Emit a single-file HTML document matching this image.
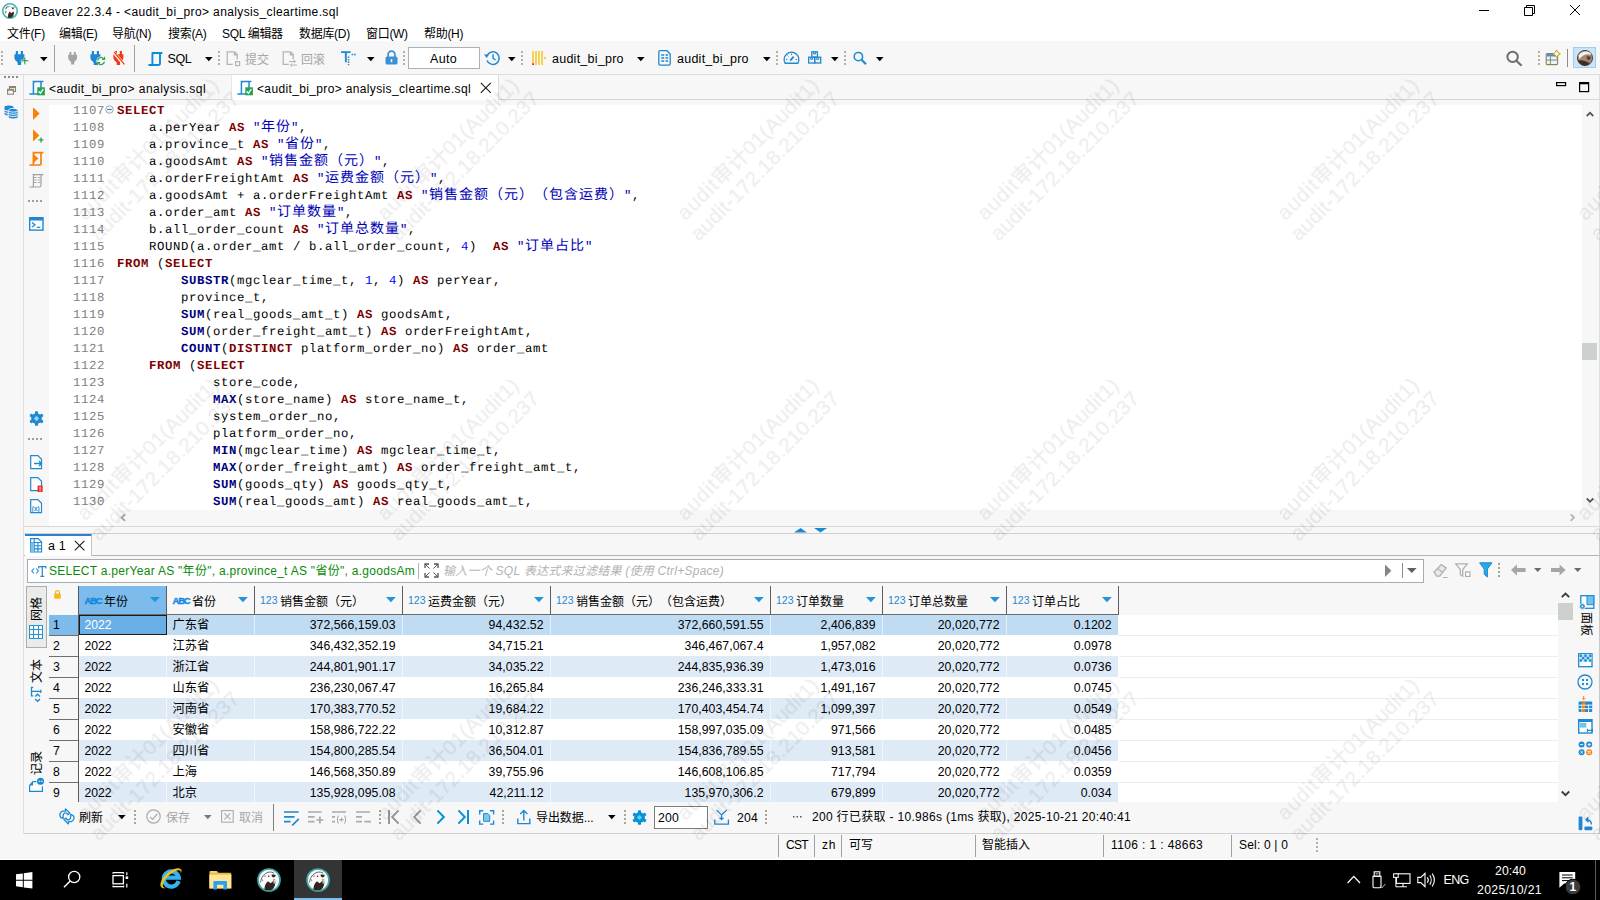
<!DOCTYPE html>
<html lang="zh">
<head>
<meta charset="utf-8">
<title>DBeaver 22.3.4 - &lt;audit_bi_pro&gt; analysis_cleartime.sql</title>
<style>
*{box-sizing:border-box;margin:0;padding:0}
html,body{width:1600px;height:900px;overflow:hidden;background:#f7f7f7}
body{position:relative;text-spacing-trim:space-all;font-family:"Liberation Sans","Noto Sans CJK SC",sans-serif;font-size:12px;color:#000}
.abs{position:absolute}
.t{position:absolute;white-space:pre;line-height:16px;height:16px}
svg{position:absolute;overflow:visible}
#titlebar{left:0;top:0;width:1600px;height:23px;background:#fff}
#menubar{left:0;top:23px;width:1600px;height:18px;background:#fff}
#toolbar{left:0;top:41px;width:1600px;height:34px;background:#f7f7f7;border-bottom:1px solid #dcdcdc}
#tabrow{left:24px;top:75px;width:1575px;height:25px;background:#f7f7f7;border-bottom:1px solid #d6d6d6}
#leftstrip{left:23px;top:74px;width:1577px;height:760px;border:1px solid #dedede;border-top:none}
#editor{left:24px;top:100px;width:1575px;height:426px;background:#f7f7f7}
#code{left:49px;top:105px;width:1533px;height:405px;background:#fff}
.ln{position:absolute;left:73px;font:12.3px/17px "Liberation Mono",monospace;letter-spacing:.62px;text-rendering:geometricPrecision;color:#808080;white-space:pre}
.cl{position:absolute;left:117px;font:12.3px/17px "Liberation Mono","Noto Sans CJK SC",monospace;letter-spacing:.62px;text-rendering:geometricPrecision;color:#000;white-space:pre;height:17px}
.z{font-size:14px;letter-spacing:1px;line-height:17px}
.k{color:#800000;font-weight:bold}
.f{color:#000080;font-weight:bold}
.s{color:#0000b4}
.n{color:#0000ff}
.wm{position:absolute;white-space:nowrap;font-size:21px;line-height:24px;color:#000;-webkit-text-stroke:.3px #000;transform-origin:0 0;transform:rotate(-45deg)}
.wm span{margin-left:-5px;letter-spacing:.12px}
.wm i{font-style:normal;letter-spacing:.75px}
.wm b{font-weight:normal;letter-spacing:.22px}
#taskbar{left:0;top:859px;width:1600px;height:41px;background:#000;border-top:1px solid #fff}
</style>
</head>
<body>
<div id="titlebar" class="abs"></div>
<div id="menubar" class="abs"></div>
<div id="toolbar" class="abs"></div>
<div id="leftstrip" class="abs"></div>
<div id="tabrow" class="abs"></div>
<div id="editor" class="abs"></div>
<div id="code" class="abs"></div>
<svg style="left:1px;top:2px" width="18" height="18" viewBox="-9 -9 18 18"><circle r="7.2" fill="#fdfdfd" stroke="#45b7b6" stroke-width="1.6"/><path d="M-2.2 6.6C-2 3.5-1.4 1.6-.2.6L1.4 2.2 3.3.4 3.9 1.3C4.2 3.4 3.4 5.4 2 6.6-.2 7.2-1.2 7.1-2.2 6.6z" fill="#3b2a24"/><path d="M1.2-3.4h3.4L2.9-1.5z" fill="#3b2a24"/><path d="M-4.6-1.9c.3-1.3.9-2.2 1.9-2.9l.7.5c-1 .7-1.6 1.6-1.9 2.8zM-4.9 1.9l.6-2.2.8.3-.5 2.2z" fill="#5a4a44"/><path d="M-2.2-4.2c.8-.5 1.6-.6 2.5-.5l-.2.8c-.7-.1-1.3 0-1.9.4z" fill="#8a7f7a"/></svg>
<div class="t" style="left:23.5px;top:4px;font-size:12px;letter-spacing:.38px">DBeaver 22.3.4 - &lt;audit_bi_pro&gt; analysis_cleartime.sql</div>
<svg style="left:1479px;top:4px" width="102" height="12" fill="none" stroke="#000" stroke-width="1"><path d="M0 6.5h10"/><path d="M45.5 3.5h8v8h-8zM47.5 3.5v-2h8v8h-2"/><path d="M91 1l10 10M101 1l-10 10"/></svg>
<div class="t" style="left:7px;top:26px;letter-spacing:-.3px">文件(F)</div>
<div class="t" style="left:59px;top:26px;letter-spacing:-.3px">编辑(E)</div>
<div class="t" style="left:112px;top:26px;letter-spacing:-.3px">导航(N)</div>
<div class="t" style="left:168px;top:26px;letter-spacing:-.3px">搜索(A)</div>
<div class="t" style="left:222px;top:26px;letter-spacing:-.3px">SQL 编辑器</div>
<div class="t" style="left:299px;top:26px;letter-spacing:-.3px">数据库(D)</div>
<div class="t" style="left:366px;top:26px;letter-spacing:-.3px">窗口(W)</div>
<div class="t" style="left:424px;top:26px;letter-spacing:-.3px">帮助(H)</div>
<svg style="left:1px;top:51px" width="2" height="16"><rect x="0" y="0" width="2" height="2" fill="#b9b0a0"/><rect x="0" y="4" width="2" height="2" fill="#b9b0a0"/><rect x="0" y="8" width="2" height="2" fill="#b9b0a0"/><rect x="0" y="12" width="2" height="2" fill="#b9b0a0"/></svg>
<svg style="left:218px;top:51px" width="2" height="16"><rect x="0" y="0" width="2" height="2" fill="#b9b0a0"/><rect x="0" y="4" width="2" height="2" fill="#b9b0a0"/><rect x="0" y="8" width="2" height="2" fill="#b9b0a0"/><rect x="0" y="12" width="2" height="2" fill="#b9b0a0"/></svg>
<svg style="left:403px;top:51px" width="2" height="16"><rect x="0" y="0" width="2" height="2" fill="#b9b0a0"/><rect x="0" y="4" width="2" height="2" fill="#b9b0a0"/><rect x="0" y="8" width="2" height="2" fill="#b9b0a0"/><rect x="0" y="12" width="2" height="2" fill="#b9b0a0"/></svg>
<svg style="left:521px;top:51px" width="2" height="16"><rect x="0" y="0" width="2" height="2" fill="#b9b0a0"/><rect x="0" y="4" width="2" height="2" fill="#b9b0a0"/><rect x="0" y="8" width="2" height="2" fill="#b9b0a0"/><rect x="0" y="12" width="2" height="2" fill="#b9b0a0"/></svg>
<svg style="left:776px;top:51px" width="2" height="16"><rect x="0" y="0" width="2" height="2" fill="#b9b0a0"/><rect x="0" y="4" width="2" height="2" fill="#b9b0a0"/><rect x="0" y="8" width="2" height="2" fill="#b9b0a0"/><rect x="0" y="12" width="2" height="2" fill="#b9b0a0"/></svg>
<svg style="left:844px;top:51px" width="2" height="16"><rect x="0" y="0" width="2" height="2" fill="#b9b0a0"/><rect x="0" y="4" width="2" height="2" fill="#b9b0a0"/><rect x="0" y="8" width="2" height="2" fill="#b9b0a0"/><rect x="0" y="12" width="2" height="2" fill="#b9b0a0"/></svg>
<svg style="left:1538px;top:51px" width="2" height="16"><rect x="0" y="0" width="2" height="2" fill="#b9b0a0"/><rect x="0" y="4" width="2" height="2" fill="#b9b0a0"/><rect x="0" y="8" width="2" height="2" fill="#b9b0a0"/><rect x="0" y="12" width="2" height="2" fill="#b9b0a0"/></svg>
<div class="abs" style="left:54px;top:45px;width:1px;height:27px;background:#a0a0a0"></div>
<div class="abs" style="left:134px;top:45px;width:1px;height:27px;background:#a0a0a0"></div>
<svg style="left:40px;top:57px" width="8" height="5"><path d="M0 0h7.6L3.8 4.2z" fill="#000"/></svg>
<svg style="left:205px;top:57px" width="8" height="5"><path d="M0 0h7.6L3.8 4.2z" fill="#000"/></svg>
<svg style="left:367px;top:57px" width="8" height="5"><path d="M0 0h7.6L3.8 4.2z" fill="#000"/></svg>
<svg style="left:508px;top:57px" width="8" height="5"><path d="M0 0h7.6L3.8 4.2z" fill="#000"/></svg>
<svg style="left:637px;top:57px" width="8" height="5"><path d="M0 0h7.6L3.8 4.2z" fill="#000"/></svg>
<svg style="left:763px;top:57px" width="8" height="5"><path d="M0 0h7.6L3.8 4.2z" fill="#000"/></svg>
<svg style="left:831px;top:57px" width="8" height="5"><path d="M0 0h7.6L3.8 4.2z" fill="#000"/></svg>
<svg style="left:876px;top:57px" width="8" height="5"><path d="M0 0h7.6L3.8 4.2z" fill="#000"/></svg>
<svg style="left:13px;top:51px" width="16" height="16"><path transform="scale(1)" d="M2.800 0h2.200v3.200h2.800V0h2.200v3.200h1.400v3.400c0 1.800-.9 3.100-2.400 3.900l-.9 1.300v2.300H4.700v-2.300l-.9-1.300C2.300 9.700 1.400 8.400 1.400 6.600V3.200h1.400z" fill="#1e88d2"/></svg>
<svg style="left:21px;top:57px" width="8" height="8"><path d="M3 0h1.6v2.900h2.900v1.6H4.600v2.900H3V4.500H0V2.900h3z" fill="#26a045" stroke="#f7f7f7" stroke-width=".5"/></svg>
<svg style="left:67px;top:52px" width="16" height="16"><path transform="scale(0.88)" d="M2.800 0h2.200v3.200h2.800V0h2.200v3.200h1.400v3.400c0 1.800-.9 3.100-2.400 3.900l-.9 1.300v2.300H4.700v-2.300l-.9-1.300C2.300 9.700 1.400 8.400 1.400 6.600V3.200h1.400z" fill="#a3a3a3"/></svg>
<svg style="left:89px;top:51px" width="16" height="16"><path transform="scale(1)" d="M2.800 0h2.200v3.200h2.800V0h2.200v3.200h1.400v3.400c0 1.800-.9 3.100-2.400 3.900l-.9 1.300v2.300H4.700v-2.300l-.9-1.300C2.300 9.700 1.400 8.400 1.400 6.600V3.200h1.400z" fill="#1e88d2"/></svg>
<svg style="left:96px;top:56px" width="10" height="10" fill="none" stroke="#2aa84a" stroke-width="1.4"><circle cx="5" cy="5" r="4.6" fill="#f7f7f7" stroke="none"/><path d="M1.600 4.300A3.400 3.400 0 0 1 7.600 2.700M8.400 5.700A3.400 3.400 0 0 1 2.400 7.300"/><path d="M8.6 0.800v2.600H6M1.400 9.200V6.600H4" stroke-width="1.100"/></svg>
<svg style="left:112px;top:51px" width="16" height="16"><path transform="scale(1)" d="M2.800 0h2.200v3.200h2.800V0h2.200v3.200h1.400v3.400c0 1.800-.9 3.100-2.400 3.900l-.9 1.300v2.300H4.700v-2.300l-.9-1.300C2.300 9.700 1.400 8.400 1.400 6.600V3.200h1.400z" fill="#f03a17"/></svg>
<svg style="left:112px;top:51px" width="16" height="16"><path d="M2 1.500L12 13.500" stroke="#f7f7f7" stroke-width="3"/><path d="M2.200 1.200L12.400 13.400" stroke="#f03a17" stroke-width="1.300"/></svg>
<svg style="left:148px;top:50.5px" width="16" height="16" fill="none" stroke="#0a8fd6" stroke-width="1.9"><path d="M3.600 2h10.800M12 2.200v10c0 1.200-.7 1.800-1.800 1.800H.4M4.400 13.800V3.800c0-1.100.6-1.800 1.700-1.800"/></svg>
<div class="t" style="left:167.500px;top:51px;font-size:12.500px;letter-spacing:-.4px">SQL</div>
<svg style="left:226px;top:51px" width="16" height="16" fill="none" stroke="#b4b4b4" stroke-width="1.300"><path d="M8.500 .8H1.200v12.600h5.600M8.500 .8l2.700 2.800v5M8.400 1v2.800h2.800" /></svg>
<svg style="left:235px;top:61px" width="6" height="6" fill="none" stroke="#b4b4b4" stroke-width="1.200"><rect x=".6" y=".6" width="4" height="4"/></svg>
<div class="t" style="left:245px;top:52px;color:#a6a6a6">提交</div>
<svg style="left:282px;top:51px" width="16" height="16" fill="none" stroke="#b4b4b4" stroke-width="1.300"><path d="M8.500 .8H1.200v12.600h5.600M8.500 .8l2.700 2.800v5M8.400 1v2.800h2.800" /></svg>
<svg style="left:289px;top:60px" width="9" height="7" fill="none" stroke="#b4b4b4" stroke-width="1"><path d="M0 1.500h6.500M4.800 0l1.700 1.500-1.700 1.500M8 5h-6.500M3.200 3.500L1.500 5l1.700 1.500"/></svg>
<div class="t" style="left:301px;top:52px;color:#a6a6a6">回滚</div>
<svg style="left:341px;top:50px" width="16" height="16" fill="#1e88d2"><path d="M0 1.200h9.600v1.900H5.800v9.200H3.900V3.100H0z"/><path d="M10.600 3.800h1.600v1.500h-1.600zM13.200 3.800h1.600v1.500h-1.600zM6.800 6.400h1.500v1.500H6.800zM6.800 9h1.500v1.500H6.800zM6.800 11.600h1.500v1.500H6.800zM6.800 14.100h1.500v1.100H6.800z"/></svg>
<svg style="left:385px;top:50px" width="13" height="16"><path d="M3.100 7V4.600a3.400 3.400 0 0 1 6.800 0V7" fill="none" stroke="#3a8fd6" stroke-width="1.700"/><rect x=".5" y="6.600" width="12" height="8" rx="1.600" fill="#3a8fd6"/><rect x="5.700" y="9.200" width="1.600" height="3" fill="#fff"/></svg>
<div class="abs" style="left:408px;top:47px;width:72px;height:22px;background:#fff;border:1px solid #a9b1b8"></div>
<div class="t" style="left:430px;top:51px;font-size:12.500px;letter-spacing:.3px">Auto</div>
<svg style="left:484px;top:50px" width="17" height="16" fill="none" stroke="#1e88d2" stroke-width="1.500"><path d="M3.300 5.200A6.300 6.300 0 1 1 3 10.400"/><path d="M9 4.200V8.200l2.600 1.800" stroke-width="1.400"/><path d="M0 4.600h5v0L2.600 8z" fill="#1e88d2" stroke="none"/></svg>
<svg style="left:532px;top:50px" width="16" height="16"><path d="M1 1v12M4 1v14M7 1v14M10 1v14" stroke="#f7c51e" stroke-width="1.500"/><path d="M12.200 6.500l2.200 1.500-2.200 1.500z" fill="#f7c51e"/><rect x=".2" y="13.200" width="1.800" height="1.800" fill="#e8281f"/></svg>
<div class="t" style="left:552px;top:51px;font-size:12.500px;letter-spacing:.25px">audit_bi_pro</div>
<svg style="left:658px;top:50px" width="14" height="16" fill="none" stroke="#1e88d2"><path d="M9 .7H2.200C1.400 .7.800 1.300.8 2.100v11.700c0 .8.600 1.400 1.400 1.400h8.600c.8 0 1.400-.6 1.400-1.400V4.100z" stroke-width="1.300"/><path d="M3.200 5h3M3.200 8h3M3.200 11h3M7.500 5h2.600M7.500 8h2.600M7.500 11h2.600" stroke-width="1.500"/></svg>
<div class="t" style="left:677px;top:51px;font-size:12.500px;letter-spacing:.25px">audit_bi_pro</div>
<svg style="left:783px;top:51px" width="17" height="14" fill="none" stroke="#1e88d2" stroke-width="1.400"><path d="M2.200 12.300A7.300 7.300 0 1 1 14.800 12.300z"/><path d="M7.200 9.600L10.600 5.600" stroke-width="1.800"/><path d="M3 8.500h1.400M8.500 2.700v1.400M12.600 8.500h1.400M4.400 4.400l1 1" stroke-width="1"/></svg>
<svg style="left:808px;top:51px" width="14" height="14" fill="none" stroke="#1e88d2" stroke-width="1.300"><rect x="3.800" y=".8" width="5.600" height="5.400"/><rect x=".7" y="6.200" width="6" height="5.800"/><rect x="6.700" y="6.200" width="6" height="5.800"/><path d="M5.600 1v2h2V1M2.700 6.400v2h2v-2M8.700 6.400v2h2v-2" stroke-width="1"/></svg>
<svg style="left:853px;top:51px" width="15" height="15" fill="none" stroke="#1a8ad6"><circle cx="5.400" cy="5.600" r="4.200" stroke-width="1.500"/><path d="M8.600 8.800l4.400 4.400" stroke-width="2.200"/></svg>
<svg style="left:1505px;top:49px" width="19" height="19" fill="none" stroke="#6e6e6e"><circle cx="7.600" cy="7.900" r="5.200" stroke-width="2"/><path d="M11.400 11.700l5.200 5" stroke-width="2.200"/></svg>
<svg style="left:1545px;top:50px" width="17" height="16" fill="none"><rect x="1.200" y="3.600" width="11.400" height="11" rx="1" stroke="#8f8259" stroke-width="1.100" fill="#e6f4fc"/><rect x="1.700" y="4.100" width="10.400" height="2.400" fill="#4a90d9"/><path d="M1.200 10h11.400M5.400 6.600v8" stroke="#8f8259" stroke-width="1"/><path d="M11.600 0l1.400 2.400 2.400 1.400-2.400 1.400-1.400 2.400-1.400-2.400-2.400-1.400 2.400-1.400z" fill="#fff6cf" stroke="#c9991c" stroke-width="1"/></svg>
<div class="abs" style="left:1567px;top:49px;width:1px;height:18px;background:#8c8c8c"></div>
<div class="abs" style="left:1573px;top:47px;width:23px;height:21px;background:#cce4f7;border:1px solid #9ccff5"></div>
<svg style="left:1576px;top:49px" width="18" height="18" viewBox="-9 -9 18 18"><circle r="7.600" fill="#a58873" stroke="#3d3d3d" stroke-width=".9"/><path d="M-7 2.600C-3 1.600 2 3.400 4.600 5.800 2.600 7.400-.6 8 -3.600 6.800-5.400 5.800-6.600 4.400-7 2.600z" fill="#3e2c25"/><path d="M-6.600-2.400C-4-6.800 2.400-7.800 5.600-4.800L6.400-3.200C2-5-2.600-3-5.400 1z" fill="#f4efe9"/><path d="M1.600-1.200c1.400-.8 3.200-.6 4.400.4-.2 1.600-1.200 2.600-2.800 3-1-.8-1.600-2-1.600-3.400z" fill="#5a4034"/></svg>
<svg style="left:4px;top:76px" width="16" height="2" ><rect x="0" y="0" width="2" height="2" fill="#8c8c8c"/><rect x="4" y="0" width="2" height="2" fill="#8c8c8c"/><rect x="8" y="0" width="2" height="2" fill="#8c8c8c"/><rect x="12" y="0" width="2" height="2" fill="#8c8c8c"/></svg>
<svg style="left:7px;top:86px" width="9" height="9" fill="none" stroke="#8c8373" stroke-width="1.100"><path d="M2.500 3V.6h6v4.800H6.400M.6 3.200h5.800v5H.6z" /><path d="M.6 4h5.800M2.500 1.300h6" stroke-width="1.300"/></svg>
<svg style="left:3px;top:104px" width="16" height="16" ><g fill="#1e88d2" stroke="#f7f7f7" stroke-width=".9"><path d="M1 3.300c0-1.300 2.300-2.300 5-2.300s5 1 5 2.300v6.400c0 1.300-2.300 2.300-5 2.300s-5-1-5-2.300z"/><path d="M1 5.700c1 .9 2.900 1.400 5 1.400M1 8c1 .9 2.900 1.400 5 1.400" fill="none" stroke-width="1"/><path d="M5.200 6.700c0-1.300 2.300-2.300 5-2.300s5 1 5 2.300v6c0 1.300-2.300 2.300-5 2.300s-5-1-5-2.300z"/><path d="M5.200 8.900c1 .9 2.900 1.400 5 1.400s4-.5 5-1.400M5.200 11.100c1 .9 2.900 1.400 5 1.400s4-.5 5-1.400M5.200 6.700c1 .9 2.900 1.400 5 1.400s4-.5 5-1.400" fill="none" stroke-width="1"/></g></svg>
<div class="abs" style="left:231px;top:75px;width:268px;height:25px;background:#fff;border-right:1px solid #dcdcdc;border-left:1px solid #e6e6e6"></div>
<svg style="left:29px;top:80px" width="16" height="16" fill="none" stroke="#1e88d2" stroke-width="1.5"><path d="M3.600 1.600h10.800M12 1.800v10.400c0 1.200-.7 1.800-1.800 1.800H.4M4.400 13.800V3.400c0-1.100.6-1.800 1.700-1.800"/></svg><svg style="left:37px;top:87px" width="9" height="9" ><rect x=".3" y=".3" width="7.600" height="8" fill="#21a352"/><path d="M1.600 4.300l1.800 2 2.900-4.200" fill="none" stroke="#e9f7ee" stroke-width="1.500"/></svg>
<div class="t" style="top:81px;letter-spacing:0.428px;left:49px;">&lt;audit_bi_pro&gt; analysis.sql</div>
<svg style="left:237px;top:80px" width="16" height="16" fill="none" stroke="#1e88d2" stroke-width="1.5"><path d="M3.600 1.600h10.800M12 1.800v10.400c0 1.200-.7 1.800-1.800 1.800H.4M4.400 13.800V3.400c0-1.100.6-1.800 1.700-1.800"/></svg><svg style="left:245px;top:87px" width="9" height="9" ><rect x=".3" y=".3" width="7.600" height="8" fill="#21a352"/><path d="M1.600 4.300l1.800 2 2.900-4.200" fill="none" stroke="#e9f7ee" stroke-width="1.500"/></svg>
<div class="t" style="top:81px;letter-spacing:0.357px;left:257px;">&lt;audit_bi_pro&gt; analysis_cleartime.sql</div>
<svg style="left:480px;top:82px" width="12" height="12" fill="none" stroke="#1a1a1a" stroke-width="1.100"><path d="M.8.800l10 10M10.800.8l-10 10"/></svg>
<svg style="left:1555px;top:81px" width="36" height="12" fill="none" stroke="#000"><rect x="1.600" y="1.600" width="9" height="3" stroke-width="1.200"/><rect x="24.600" y="1.600" width="9" height="9" stroke-width="1.200"/><path d="M24.600 2.400h9" stroke-width="1.800"/></svg>
<svg style="left:33px;top:107px" width="8" height="14" ><path d="M0 .3L6.600 6.600 0 13z" fill="#f5820b"/></svg>
<svg style="left:33px;top:129px" width="12" height="15" ><path d="M0 .3L6.400 6.400 0 12.600z" fill="#f5820b"/><path d="M7.300 8.400h1.400v1.800h1.800v1.400H8.700v1.800H7.300v-1.800H5.500v-1.400h1.800z" fill="#2da44e"/></svg>
<svg style="left:29px;top:151px" width="16" height="16" fill="none" stroke="#f5820b" stroke-width="1.7"><path d="M3.600 1.600h10.800M12 1.800v10.400c0 1.200-.7 1.800-1.800 1.800H.4M4.400 13.800V3.400c0-1.100.6-1.800 1.700-1.800"/></svg><svg style="left:33px;top:154px" width="8" height="9" ><path d="M.6.500L5.600 4.500.6 8.500z" fill="#f5820b"/><path d="M.8.300v8.400" stroke="#f5820b" stroke-width="1.200"/></svg>
<svg style="left:29px;top:173px" width="16" height="16" fill="none" stroke="#a0a0a0" stroke-width="1.2"><path d="M3.600 1.600h10.800M12 1.800v10.400c0 1.200-.7 1.800-1.800 1.800H.4M4.400 13.800V3.400c0-1.100.6-1.800 1.700-1.800"/></svg><svg style="left:34px;top:177px" width="7" height="8" stroke="#a8a8a8" stroke-width="1"><path d="M0 .5h2.600M3.800 .5h2.600M0 3h2.600M3.800 3h2.600M0 5.500h2.600M3.800 5.500h2.600"/></svg>
<svg style="left:28px;top:200px" width="16" height="2" ><rect x="0" y="0" width="2" height="2" fill="#a39e86"/><rect x="4" y="0" width="2" height="2" fill="#a39e86"/><rect x="8" y="0" width="2" height="2" fill="#a39e86"/><rect x="12" y="0" width="2" height="2" fill="#a39e86"/></svg>
<svg style="left:29px;top:217px" width="15" height="14" ><rect x=".7" y=".7" width="13.300" height="12.400" fill="#fff" stroke="#1e88d2" stroke-width="1.400"/><rect x=".7" y=".7" width="13.300" height="2.800" fill="#1e88d2"/><path d="M3 5.500l3 2.300-3 2.300M7.800 10.400h3.600" fill="none" stroke="#1e88d2" stroke-width="1.300"/></svg>
<svg style="left:29px;top:411px" width="15" height="15" ><g transform="translate(7.500 7.500)" fill="#1e88d2"><rect x="-1.500" y="-7.300" width="3" height="4" rx=".6" transform="rotate(0)"/><rect x="-1.500" y="-7.300" width="3" height="4" rx=".6" transform="rotate(60)"/><rect x="-1.500" y="-7.300" width="3" height="4" rx=".6" transform="rotate(120)"/><rect x="-1.500" y="-7.300" width="3" height="4" rx=".6" transform="rotate(180)"/><rect x="-1.500" y="-7.300" width="3" height="4" rx=".6" transform="rotate(240)"/><rect x="-1.500" y="-7.300" width="3" height="4" rx=".6" transform="rotate(300)"/><circle r="5.300"/><path d="M0-2.700L2.700 0 0 2.700-2.700 0z" fill="#8fd6f7"/></g></svg>
<svg style="left:28px;top:438px" width="16" height="2" ><rect x="0" y="0" width="2" height="2" fill="#a39e86"/><rect x="4" y="0" width="2" height="2" fill="#a39e86"/><rect x="8" y="0" width="2" height="2" fill="#a39e86"/><rect x="12" y="0" width="2" height="2" fill="#a39e86"/></svg>
<svg style="left:29px;top:455px" width="16" height="16" ><path d="M1.7 0.7h7.200l3.600 3.600v9.400H1.7z" fill="#fff" stroke="#1e88d2" stroke-width="1.200"/><path d="M5 8.500h7.500M10 6l2.600 2.500L10 11" fill="none" stroke="#1e88d2" stroke-width="1.300"/></svg>
<svg style="left:29px;top:477px" width="16" height="16" ><path d="M1.7 0.7h7.200l3.600 3.600v9.400H1.7z" fill="#fff" stroke="#1e88d2" stroke-width="1.200"/><rect x="8.600" y="8.600" width="5" height="6.400" fill="#f3271c"/><path d="M11.100 9.800v2.800M11.100 13.300v1" stroke="#fff" stroke-width="1"/></svg>
<svg style="left:29px;top:499px" width="16" height="16" ><path d="M1.7 0.7h7.200l3.600 3.600v9.400H1.7z" fill="#fff" stroke="#1e88d2" stroke-width="1.200"/><text x="6.800" y="11.800" font-size="6.500" font-family="Liberation Sans,sans-serif" font-weight="bold" fill="#1e88d2" text-anchor="middle">(x)</text></svg>
<div class="abs" style="left:49px;top:510px;width:67px;height:16px;background:#fff;"></div>
<svg style="left:1586px;top:110px" width="10" height="10" fill="none" stroke="#555" stroke-width="1.800"><path d="M.8 6L4 2.700 7.200 6"/></svg>
<svg style="left:1586px;top:496px" width="10" height="10" fill="none" stroke="#555" stroke-width="1.800"><path d="M.8 2.500L4 5.800 7.200 2.500"/></svg>
<div class="abs" style="left:1582px;top:343px;width:15px;height:17px;background:#cdd1cd;"></div>
<svg style="left:119px;top:513px" width="10" height="10" fill="none" stroke="#a2a2a2" stroke-width="1.800"><path d="M6 1.400L2.700 4.600 6 7.800"/></svg>
<svg style="left:1568px;top:513px" width="10" height="10" fill="none" stroke="#b4b4b4" stroke-width="1.800"><path d="M2.700 1.400L6 4.600 2.700 7.800"/></svg>
<svg style="left:794px;top:527px" width="36" height="6" ><path d="M0 5.500h13L6.500 1zM20 1h13l-6.500 4.500z" fill="#1e88d2"/></svg>
<div class="ln" style="top:103px">1107</div>
<div class="cl" style="top:103px;left:117px"><b class="k">SELECT</b></div>
<div class="ln" style="top:120px">1108</div>
<div class="cl" style="top:120px;left:149px">a.perYear <b class="k">AS</b> <span class="s">"<span class="z">年份</span>"</span>,</div>
<div class="ln" style="top:137px">1109</div>
<div class="cl" style="top:137px;left:149px">a.province_t <b class="k">AS</b> <span class="s">"<span class="z">省份</span>"</span>,</div>
<div class="ln" style="top:154px">1110</div>
<div class="cl" style="top:154px;left:149px">a.goodsAmt <b class="k">AS</b> <span class="s">"<span class="z">销售金额（元）</span>"</span>,</div>
<div class="ln" style="top:171px">1111</div>
<div class="cl" style="top:171px;left:149px">a.orderFreightAmt <b class="k">AS</b> <span class="s">"<span class="z">运费金额（元）</span>"</span>,</div>
<div class="ln" style="top:188px">1112</div>
<div class="cl" style="top:188px;left:149px">a.goodsAmt + a.orderFreightAmt <b class="k">AS</b> <span class="s">"<span class="z">销售金额（元）（包含运费）</span>"</span>,</div>
<div class="ln" style="top:205px">1113</div>
<div class="cl" style="top:205px;left:149px">a.order_amt <b class="k">AS</b> <span class="s">"<span class="z">订单数量</span>"</span>,</div>
<div class="ln" style="top:222px">1114</div>
<div class="cl" style="top:222px;left:149px">b.all_order_count <b class="k">AS</b> <span class="s">"<span class="z">订单总数量</span>"</span>,</div>
<div class="ln" style="top:239px">1115</div>
<div class="cl" style="top:239px;left:149px">ROUND(a.order_amt / b.all_order_count, <span class="n">4</span>)  <b class="k">AS</b> <span class="s">"<span class="z">订单占比</span>"</span></div>
<div class="ln" style="top:256px">1116</div>
<div class="cl" style="top:256px;left:117px"><b class="k">FROM</b> (<b class="k">SELECT</b></div>
<div class="ln" style="top:273px">1117</div>
<div class="cl" style="top:273px;left:181px"><b class="f">SUBSTR</b>(mgclear_time_t, <span class="n">1</span>, <span class="n">4</span>) <b class="k">AS</b> perYear,</div>
<div class="ln" style="top:290px">1118</div>
<div class="cl" style="top:290px;left:181px">province_t,</div>
<div class="ln" style="top:307px">1119</div>
<div class="cl" style="top:307px;left:181px"><b class="f">SUM</b>(real_goods_amt_t) <b class="k">AS</b> goodsAmt,</div>
<div class="ln" style="top:324px">1120</div>
<div class="cl" style="top:324px;left:181px"><b class="f">SUM</b>(order_freight_amt_t) <b class="k">AS</b> orderFreightAmt,</div>
<div class="ln" style="top:341px">1121</div>
<div class="cl" style="top:341px;left:181px"><b class="f">COUNT</b>(<b class="k">DISTINCT</b> platform_order_no) <b class="k">AS</b> order_amt</div>
<div class="ln" style="top:358px">1122</div>
<div class="cl" style="top:358px;left:149px"><b class="k">FROM</b> (<b class="k">SELECT</b></div>
<div class="ln" style="top:375px">1123</div>
<div class="cl" style="top:375px;left:213px">store_code,</div>
<div class="ln" style="top:392px">1124</div>
<div class="cl" style="top:392px;left:213px"><b class="f">MAX</b>(store_name) <b class="k">AS</b> store_name_t,</div>
<div class="ln" style="top:409px">1125</div>
<div class="cl" style="top:409px;left:213px">system_order_no,</div>
<div class="ln" style="top:426px">1126</div>
<div class="cl" style="top:426px;left:213px">platform_order_no,</div>
<div class="ln" style="top:443px">1127</div>
<div class="cl" style="top:443px;left:213px"><b class="f">MIN</b>(mgclear_time) <b class="k">AS</b> mgclear_time_t,</div>
<div class="ln" style="top:460px">1128</div>
<div class="cl" style="top:460px;left:213px"><b class="f">MAX</b>(order_freight_amt) <b class="k">AS</b> order_freight_amt_t,</div>
<div class="ln" style="top:477px">1129</div>
<div class="cl" style="top:477px;left:213px"><b class="f">SUM</b>(goods_qty) <b class="k">AS</b> goods_qty_t,</div>
<div class="ln" style="top:494px">1130</div>
<div class="cl" style="top:494px;left:213px"><b class="f">SUM</b>(real_goods_amt) <b class="k">AS</b> real_goods_amt_t,</div>
<svg style="left:105px;top:105px" width="9" height="9" ><circle cx="4.500" cy="4.500" r="3.800" fill="#eef3f8" stroke="#8aa0b8" stroke-width=".9"/><path d="M2.300 4.500h4.400" stroke="#5a6f88" stroke-width="1"/></svg>
<div class="abs" style="left:24px;top:526px;width:1576px;height:1px;background:#d9d9d9;"></div>
<div class="abs" style="left:24px;top:533px;width:1576px;height:1px;background:#d0d0d0;"></div>
<div class="abs" style="left:24px;top:555px;width:1576px;height:1px;background:#b4b4b4;"></div>
<div class="abs" style="left:24px;top:833px;width:1576px;height:1px;background:#d0d0d0;"></div>
<div class="abs" style="left:1599px;top:534px;width:1px;height:300px;background:#c8c8c8;"></div>
<div class="abs" style="left:25px;top:534px;width:67px;height:22px;background:#fff;border-top:2px solid #2a82d4;border-right:1px solid #c4c4c4"></div>
<svg style="left:30px;top:538px" width="13" height="15" ><path d="M.6.600h7.600l3.400 3.400v10H.6z" fill="#fff" stroke="#1e88d2" stroke-width="1.100"/><path d="M.6 4.500h11M.6 7.700h11M.6 10.900h11M4.200 1v13M7.900 4.500v9.500" stroke="#1e88d2" stroke-width="1.100"/><path d="M.6 4.500h3.600v9.500H.6z" fill="#7cc4ee"/></svg>
<div class="t" style="top:538px;letter-spacing:0.203px;left:48px;font-size:12.5px;">a 1</div>
<svg style="left:74px;top:540px" width="12" height="12" fill="none" stroke="#1a1a1a" stroke-width="1.100"><path d="M.8.800l9.600 9.600M10.400.8L.8 10.400"/></svg>
<div class="abs" style="left:27px;top:559px;width:1397px;height:24px;background:#fff;border:1px solid #a3adb7"></div>
<svg style="left:31px;top:566px" width="16" height="11" ><path d="M3 2.500L.8 5l2.200 2.500M5.200 2.500L7.400 5 5.200 7.500" fill="none" stroke="#1e88d2" stroke-width="1.100"/><path d="M7.600.6h7.400M7.600.6v2M15 .6v2M11.300.6v9.800M9.400 10.400h3.800" fill="none" stroke="#1e88d2" stroke-width="1.200"/></svg>
<div class="t" style="top:563px;letter-spacing:0.283px;left:49px;color:#0a8a0a;">SELECT a.perYear AS "年份", a.province_t AS "省份", a.goodsAm</div>
<div class="abs" style="left:418px;top:563px;width:1px;height:16px;background:#b0b0b0;"></div>
<svg style="left:424px;top:563px" width="16" height="16" fill="none" stroke="#555" stroke-width="1.300"><path d="M1 5V1h4M10 1h4v4M14 10v4h-4M5 14H1v-4" /><path d="M1.500 1.500l4 4M13.500 1.500l-4 4M13.500 13.500l-4-4M1.500 13.500l4-4" stroke-width="1"/></svg>
<div class="t" style="top:563px;letter-spacing:0.248px;left:443px;color:#b2b2b2;font-style:italic;">输入一个 SQL 表达式来过滤结果 (使用 Ctrl+Space)</div>
<svg style="left:1385px;top:564px" width="8" height="14" ><path d="M0 .5L6.400 6.700 0 13z" fill="#858585"/></svg>
<div class="abs" style="left:1402px;top:563px;width:1px;height:15px;background:#8a8a8a;"></div>
<svg style="left:1407px;top:568px" width="10.6" height="6" ><path d="M0 0h9.6L4.8 5z" fill="#606060"/></svg>
<svg style="left:1433px;top:563px" width="16" height="16" ><path d="M1 9.200L8.200 1.600l5 3.400-6.400 8.200H3.600z" fill="#e9e9e9" stroke="#b0b0b0" stroke-width="1.300"/><path d="M4.600 5.600l5.200 3.800" stroke="#b0b0b0" stroke-width="1.200"/><path d="M10 14.500h4.500" stroke="#b0b0b0" stroke-width="1"/></svg>
<svg style="left:1455px;top:563px" width="17" height="16" ><path d="M.8.800h11.400L7.700 6.600v6.600L5.300 11.400V6.600z" fill="none" stroke="#b0b0b0" stroke-width="1.300"/><rect x="10.600" y="9" width="4.400" height="4.400" fill="#fff" stroke="#a8a8a8" stroke-width="1.100"/></svg>
<svg style="left:1479px;top:562px" width="14" height="16" ><path d="M.6.800h12.400L8.400 7v8L5.200 12.300V7z" fill="#29a7e6" stroke="#1e88d2" stroke-width="1"/></svg>
<svg style="left:1498px;top:563px" width="2" height="16" ><rect x="0" y="0" width="2" height="2" fill="#aaa68a"/><rect x="0" y="4" width="2" height="2" fill="#aaa68a"/><rect x="0" y="8" width="2" height="2" fill="#aaa68a"/><rect x="0" y="12" width="2" height="2" fill="#aaa68a"/></svg>
<svg style="left:1511px;top:564px" width="15" height="12" ><path d="M0 6L6 .4V4h8.600v4H6v3.600z" fill="#a6a6a6"/></svg>
<svg style="left:1534px;top:568px" width="8.4" height="5" ><path d="M0 0h7.4L3.7 4z" fill="#6a6a6a"/></svg>
<svg style="left:1551px;top:564px" width="15" height="12" ><path d="M14.600 6L8.600.4V4H0v4h8.600v3.600z" fill="#a6a6a6"/></svg>
<svg style="left:1574px;top:568px" width="8.4" height="5" ><path d="M0 0h7.4L3.7 4z" fill="#6a6a6a"/></svg>
<div class="abs" style="left:26px;top:586px;width:21px;height:62px;background:#e9ece9;border:1px solid #adadad"></div>
<div class="t" style="left:30px;top:597px;width:24px;font-size:12px;transform-origin:0 0;transform:translate(-1px,24px) rotate(-90deg)">网格</div>
<svg style="left:29px;top:625px" width="15" height="15" ><rect x=".5" y=".5" width="13" height="13" fill="#fdf8f2" stroke="#1e96d8" stroke-width="1"/><path d="M.5 4.500h13M.5 9.500h13M4.500.5v13M9.500.5v13" stroke="#1e96d8" stroke-width="1"/></svg>
<div class="t" style="left:30px;top:659px;width:24px;font-size:12px;transform-origin:0 0;transform:translate(-1px,24px) rotate(-90deg)">文本</div>
<svg style="left:29px;top:685px" width="14" height="18" ><path d="M4.200 2.300H2.500v8.600h1.700M2.500 6.400H12M11.800 4.800V8" fill="none" stroke="#1a8ad0" stroke-width="1.300"/><path d="M6.200 11.600l2.400-2.300 2.400 2.300M6.200 14l2.400 2.300 2.400-2.300" fill="none" stroke="#1a8ad0" stroke-width="1.400"/></svg>
<div class="t" style="left:30px;top:751px;width:24px;font-size:12px;transform-origin:0 0;transform:translate(-1px,24px) rotate(-90deg)">记录</div>
<svg style="left:29px;top:777px" width="16" height="16" ><path d="M.6 8.500L4 4.600h3.400M.6 8.500v5.900h12.800V9.200" fill="#fff" stroke="#1a8ad0" stroke-width="1.200"/><path d="M.6 8.500L4 4.600v3.900z" fill="#1a8ad0"/><circle cx="11.500" cy="4.300" r="3.500" fill="#1a8ad0"/><path d="M9.600 4.300h1.400M11.800 4.300h1.800" stroke="#fff" stroke-width="1"/></svg>
<div class="abs" style="left:49px;top:586px;width:1509px;height:216px;background:#fff;"></div>
<div class="abs" style="left:49px;top:586px;width:1509px;height:29px;background:#f7f7f7;"></div>
<div class="abs" style="left:49px;top:614px;width:29px;height:188px;background:#f7f7f7;"></div>
<svg style="left:54px;top:590px" width="7" height="9" ><path d="M1.500 4V2.600a2 2 0 0 1 4 0V4" fill="none" stroke="#f3b81e" stroke-width="1.100"/><rect x=".2" y="3.600" width="6.600" height="5.200" rx=".8" fill="#f6b91c"/></svg>
<div class="abs" style="left:79px;top:615px;width:1039px;height:20px;background:#c0dcf3;"></div>
<div class="abs" style="left:49px;top:615px;width:29px;height:20px;background:#7cbbec;"></div>
<div class="abs" style="left:1119px;top:635px;width:439px;height:1px;background:#ededed;"></div>
<div class="abs" style="left:49px;top:635px;width:29px;height:1px;background:#6f6f6f;"></div>
<div class="t" style="top:617px;left:53px;font-size:12.25px;">1</div>
<div class="abs" style="left:1119px;top:656px;width:439px;height:1px;background:#ededed;"></div>
<div class="abs" style="left:49px;top:656px;width:29px;height:1px;background:#6f6f6f;"></div>
<div class="t" style="top:638px;left:53px;font-size:12.25px;">2</div>
<div class="abs" style="left:79px;top:656px;width:1039px;height:21px;background:#dfeaf7;"></div>
<div class="abs" style="left:1119px;top:677px;width:439px;height:1px;background:#ededed;"></div>
<div class="abs" style="left:49px;top:677px;width:29px;height:1px;background:#6f6f6f;"></div>
<div class="t" style="top:659px;left:53px;font-size:12.25px;">3</div>
<div class="abs" style="left:1119px;top:698px;width:439px;height:1px;background:#ededed;"></div>
<div class="abs" style="left:49px;top:698px;width:29px;height:1px;background:#6f6f6f;"></div>
<div class="t" style="top:680px;left:53px;font-size:12.25px;">4</div>
<div class="abs" style="left:79px;top:698px;width:1039px;height:21px;background:#dfeaf7;"></div>
<div class="abs" style="left:1119px;top:719px;width:439px;height:1px;background:#ededed;"></div>
<div class="abs" style="left:49px;top:719px;width:29px;height:1px;background:#6f6f6f;"></div>
<div class="t" style="top:701px;left:53px;font-size:12.25px;">5</div>
<div class="abs" style="left:1119px;top:740px;width:439px;height:1px;background:#ededed;"></div>
<div class="abs" style="left:49px;top:740px;width:29px;height:1px;background:#6f6f6f;"></div>
<div class="t" style="top:722px;left:53px;font-size:12.25px;">6</div>
<div class="abs" style="left:79px;top:740px;width:1039px;height:21px;background:#dfeaf7;"></div>
<div class="abs" style="left:1119px;top:761px;width:439px;height:1px;background:#ededed;"></div>
<div class="abs" style="left:49px;top:761px;width:29px;height:1px;background:#6f6f6f;"></div>
<div class="t" style="top:743px;left:53px;font-size:12.25px;">7</div>
<div class="abs" style="left:1119px;top:782px;width:439px;height:1px;background:#ededed;"></div>
<div class="abs" style="left:49px;top:782px;width:29px;height:1px;background:#6f6f6f;"></div>
<div class="t" style="top:764px;left:53px;font-size:12.25px;">8</div>
<div class="abs" style="left:79px;top:782px;width:1039px;height:20px;background:#dfeaf7;"></div>

<div class="t" style="top:785px;left:53px;font-size:12.25px;">9</div>
<div class="abs" style="left:166px;top:615px;width:1px;height:187px;background:rgba(255,255,255,.55);"></div>
<div class="abs" style="left:254px;top:615px;width:1px;height:187px;background:rgba(255,255,255,.55);"></div>
<div class="abs" style="left:402px;top:615px;width:1px;height:187px;background:rgba(255,255,255,.55);"></div>
<div class="abs" style="left:550px;top:615px;width:1px;height:187px;background:rgba(255,255,255,.55);"></div>
<div class="abs" style="left:770px;top:615px;width:1px;height:187px;background:rgba(255,255,255,.55);"></div>
<div class="abs" style="left:882px;top:615px;width:1px;height:187px;background:rgba(255,255,255,.55);"></div>
<div class="abs" style="left:1006px;top:615px;width:1px;height:187px;background:rgba(255,255,255,.55);"></div>
<div class="abs" style="left:1118px;top:615px;width:1px;height:187px;background:rgba(255,255,255,.55);"></div>
<div class="abs" style="left:78px;top:586px;width:1px;height:216px;background:#5a5a5a;"></div>
<div class="abs" style="left:79px;top:586px;width:88px;height:28px;background:#7cbbec;"></div>
<div class="abs" style="left:78px;top:614px;width:1041px;height:1px;background:#6a6a6a;"></div>
<div class="abs" style="left:166px;top:586px;width:1px;height:29px;background:#5f5f5f;"></div>
<div class="t" style="top:594px;letter-spacing:-1.198px;left:84.5px;font-size:9.5px;color:#1289de;font-weight:bold;line-height:14px;height:14px;-webkit-text-stroke:.35px #1289de;">ABC</div>
<div class="t" style="top:594px;left:104px;">年份</div>
<svg style="left:149.5px;top:597px" width="10.8" height="6.2" ><path d="M0 0h9.8L4.9 5.2z" fill="#1e96d8"/></svg>
<div class="abs" style="left:254px;top:586px;width:1px;height:29px;background:#5f5f5f;"></div>
<div class="t" style="top:594px;letter-spacing:-1.198px;left:172.5px;font-size:9.5px;color:#1289de;font-weight:bold;line-height:14px;height:14px;-webkit-text-stroke:.35px #1289de;">ABC</div>
<div class="t" style="top:594px;left:192px;">省份</div>
<svg style="left:237.5px;top:597px" width="10.8" height="6.2" ><path d="M0 0h9.8L4.9 5.2z" fill="#1e96d8"/></svg>
<div class="abs" style="left:402px;top:586px;width:1px;height:29px;background:#5f5f5f;"></div>
<div class="t" style="top:593px;letter-spacing:-0.010px;left:260px;font-size:10.5px;color:#1e88d2;line-height:14px;height:14px;">123</div>
<div class="t" style="top:594px;left:280px;">销售金额（元）</div>
<svg style="left:385.5px;top:597px" width="10.8" height="6.2" ><path d="M0 0h9.8L4.9 5.2z" fill="#1e96d8"/></svg>
<div class="abs" style="left:550px;top:586px;width:1px;height:29px;background:#5f5f5f;"></div>
<div class="t" style="top:593px;letter-spacing:-0.010px;left:408px;font-size:10.5px;color:#1e88d2;line-height:14px;height:14px;">123</div>
<div class="t" style="top:594px;left:428px;">运费金额（元）</div>
<svg style="left:533.5px;top:597px" width="10.8" height="6.2" ><path d="M0 0h9.8L4.9 5.2z" fill="#1e96d8"/></svg>
<div class="abs" style="left:770px;top:586px;width:1px;height:29px;background:#5f5f5f;"></div>
<div class="t" style="top:593px;letter-spacing:-0.010px;left:556px;font-size:10.5px;color:#1e88d2;line-height:14px;height:14px;">123</div>
<div class="t" style="top:594px;left:576px;">销售金额（元）（包含运费）</div>
<svg style="left:753.5px;top:597px" width="10.8" height="6.2" ><path d="M0 0h9.8L4.9 5.2z" fill="#1e96d8"/></svg>
<div class="abs" style="left:882px;top:586px;width:1px;height:29px;background:#5f5f5f;"></div>
<div class="t" style="top:593px;letter-spacing:-0.010px;left:776px;font-size:10.5px;color:#1e88d2;line-height:14px;height:14px;">123</div>
<div class="t" style="top:594px;left:796px;">订单数量</div>
<svg style="left:865.5px;top:597px" width="10.8" height="6.2" ><path d="M0 0h9.8L4.9 5.2z" fill="#1e96d8"/></svg>
<div class="abs" style="left:1006px;top:586px;width:1px;height:29px;background:#5f5f5f;"></div>
<div class="t" style="top:593px;letter-spacing:-0.010px;left:888px;font-size:10.5px;color:#1e88d2;line-height:14px;height:14px;">123</div>
<div class="t" style="top:594px;left:908px;">订单总数量</div>
<svg style="left:989.5px;top:597px" width="10.8" height="6.2" ><path d="M0 0h9.8L4.9 5.2z" fill="#1e96d8"/></svg>
<div class="abs" style="left:1118px;top:586px;width:1px;height:29px;background:#5f5f5f;"></div>
<div class="t" style="top:593px;letter-spacing:-0.010px;left:1012px;font-size:10.5px;color:#1e88d2;line-height:14px;height:14px;">123</div>
<div class="t" style="top:594px;left:1032px;">订单占比</div>
<svg style="left:1101.5px;top:597px" width="10.8" height="6.2" ><path d="M0 0h9.8L4.9 5.2z" fill="#1e96d8"/></svg>
<div class="abs" style="left:79px;top:615px;width:88px;height:20px;background:#6aaee6;border:1px solid #1c1c1c"></div>
<div class="t" style="top:617px;letter-spacing:-0.066px;left:84.5px;font-size:12.25px;color:#fff;">2022</div>
<div class="t" style="top:617px;left:172.5px;font-size:12.25px;">广东省</div>
<div class="t" style="top:617px;letter-spacing:0.050px;right:1204.45px;font-size:12.25px;">372,566,159.03</div>
<div class="t" style="top:617px;letter-spacing:0.050px;right:1056.45px;font-size:12.25px;">94,432.52</div>
<div class="t" style="top:617px;letter-spacing:0.050px;right:836.45px;font-size:12.25px;">372,660,591.55</div>
<div class="t" style="top:617px;letter-spacing:0.050px;right:724.45px;font-size:12.25px;">2,406,839</div>
<div class="t" style="top:617px;letter-spacing:0.050px;right:600.45px;font-size:12.25px;">20,020,772</div>
<div class="t" style="top:617px;letter-spacing:0.050px;right:488.45px;font-size:12.25px;">0.1202</div>
<div class="t" style="top:638px;letter-spacing:-0.066px;left:84.5px;font-size:12.25px;">2022</div>
<div class="t" style="top:638px;left:172.5px;font-size:12.25px;">江苏省</div>
<div class="t" style="top:638px;letter-spacing:0.050px;right:1204.45px;font-size:12.25px;">346,432,352.19</div>
<div class="t" style="top:638px;letter-spacing:0.050px;right:1056.45px;font-size:12.25px;">34,715.21</div>
<div class="t" style="top:638px;letter-spacing:0.050px;right:836.45px;font-size:12.25px;">346,467,067.4</div>
<div class="t" style="top:638px;letter-spacing:0.050px;right:724.45px;font-size:12.25px;">1,957,082</div>
<div class="t" style="top:638px;letter-spacing:0.050px;right:600.45px;font-size:12.25px;">20,020,772</div>
<div class="t" style="top:638px;letter-spacing:0.050px;right:488.45px;font-size:12.25px;">0.0978</div>
<div class="t" style="top:659px;letter-spacing:-0.066px;left:84.5px;font-size:12.25px;">2022</div>
<div class="t" style="top:659px;left:172.5px;font-size:12.25px;">浙江省</div>
<div class="t" style="top:659px;letter-spacing:0.050px;right:1204.45px;font-size:12.25px;">244,801,901.17</div>
<div class="t" style="top:659px;letter-spacing:0.050px;right:1056.45px;font-size:12.25px;">34,035.22</div>
<div class="t" style="top:659px;letter-spacing:0.050px;right:836.45px;font-size:12.25px;">244,835,936.39</div>
<div class="t" style="top:659px;letter-spacing:0.050px;right:724.45px;font-size:12.25px;">1,473,016</div>
<div class="t" style="top:659px;letter-spacing:0.050px;right:600.45px;font-size:12.25px;">20,020,772</div>
<div class="t" style="top:659px;letter-spacing:0.050px;right:488.45px;font-size:12.25px;">0.0736</div>
<div class="t" style="top:680px;letter-spacing:-0.066px;left:84.5px;font-size:12.25px;">2022</div>
<div class="t" style="top:680px;left:172.5px;font-size:12.25px;">山东省</div>
<div class="t" style="top:680px;letter-spacing:0.050px;right:1204.45px;font-size:12.25px;">236,230,067.47</div>
<div class="t" style="top:680px;letter-spacing:0.050px;right:1056.45px;font-size:12.25px;">16,265.84</div>
<div class="t" style="top:680px;letter-spacing:0.050px;right:836.45px;font-size:12.25px;">236,246,333.31</div>
<div class="t" style="top:680px;letter-spacing:0.050px;right:724.45px;font-size:12.25px;">1,491,167</div>
<div class="t" style="top:680px;letter-spacing:0.050px;right:600.45px;font-size:12.25px;">20,020,772</div>
<div class="t" style="top:680px;letter-spacing:0.050px;right:488.45px;font-size:12.25px;">0.0745</div>
<div class="t" style="top:701px;letter-spacing:-0.066px;left:84.5px;font-size:12.25px;">2022</div>
<div class="t" style="top:701px;left:172.5px;font-size:12.25px;">河南省</div>
<div class="t" style="top:701px;letter-spacing:0.050px;right:1204.45px;font-size:12.25px;">170,383,770.52</div>
<div class="t" style="top:701px;letter-spacing:0.050px;right:1056.45px;font-size:12.25px;">19,684.22</div>
<div class="t" style="top:701px;letter-spacing:0.050px;right:836.45px;font-size:12.25px;">170,403,454.74</div>
<div class="t" style="top:701px;letter-spacing:0.050px;right:724.45px;font-size:12.25px;">1,099,397</div>
<div class="t" style="top:701px;letter-spacing:0.050px;right:600.45px;font-size:12.25px;">20,020,772</div>
<div class="t" style="top:701px;letter-spacing:0.050px;right:488.45px;font-size:12.25px;">0.0549</div>
<div class="t" style="top:722px;letter-spacing:-0.066px;left:84.5px;font-size:12.25px;">2022</div>
<div class="t" style="top:722px;left:172.5px;font-size:12.25px;">安徽省</div>
<div class="t" style="top:722px;letter-spacing:0.050px;right:1204.45px;font-size:12.25px;">158,986,722.22</div>
<div class="t" style="top:722px;letter-spacing:0.050px;right:1056.45px;font-size:12.25px;">10,312.87</div>
<div class="t" style="top:722px;letter-spacing:0.050px;right:836.45px;font-size:12.25px;">158,997,035.09</div>
<div class="t" style="top:722px;letter-spacing:0.050px;right:724.45px;font-size:12.25px;">971,566</div>
<div class="t" style="top:722px;letter-spacing:0.050px;right:600.45px;font-size:12.25px;">20,020,772</div>
<div class="t" style="top:722px;letter-spacing:0.050px;right:488.45px;font-size:12.25px;">0.0485</div>
<div class="t" style="top:743px;letter-spacing:-0.066px;left:84.5px;font-size:12.25px;">2022</div>
<div class="t" style="top:743px;left:172.5px;font-size:12.25px;">四川省</div>
<div class="t" style="top:743px;letter-spacing:0.050px;right:1204.45px;font-size:12.25px;">154,800,285.54</div>
<div class="t" style="top:743px;letter-spacing:0.050px;right:1056.45px;font-size:12.25px;">36,504.01</div>
<div class="t" style="top:743px;letter-spacing:0.050px;right:836.45px;font-size:12.25px;">154,836,789.55</div>
<div class="t" style="top:743px;letter-spacing:0.050px;right:724.45px;font-size:12.25px;">913,581</div>
<div class="t" style="top:743px;letter-spacing:0.050px;right:600.45px;font-size:12.25px;">20,020,772</div>
<div class="t" style="top:743px;letter-spacing:0.050px;right:488.45px;font-size:12.25px;">0.0456</div>
<div class="t" style="top:764px;letter-spacing:-0.066px;left:84.5px;font-size:12.25px;">2022</div>
<div class="t" style="top:764px;left:172.5px;font-size:12.25px;">上海</div>
<div class="t" style="top:764px;letter-spacing:0.050px;right:1204.45px;font-size:12.25px;">146,568,350.89</div>
<div class="t" style="top:764px;letter-spacing:0.050px;right:1056.45px;font-size:12.25px;">39,755.96</div>
<div class="t" style="top:764px;letter-spacing:0.050px;right:836.45px;font-size:12.25px;">146,608,106.85</div>
<div class="t" style="top:764px;letter-spacing:0.050px;right:724.45px;font-size:12.25px;">717,794</div>
<div class="t" style="top:764px;letter-spacing:0.050px;right:600.45px;font-size:12.25px;">20,020,772</div>
<div class="t" style="top:764px;letter-spacing:0.050px;right:488.45px;font-size:12.25px;">0.0359</div>
<div class="t" style="top:785px;letter-spacing:-0.066px;left:84.5px;font-size:12.25px;">2022</div>
<div class="t" style="top:785px;left:172.5px;font-size:12.25px;">北京</div>
<div class="t" style="top:785px;letter-spacing:0.050px;right:1204.45px;font-size:12.25px;">135,928,095.08</div>
<div class="t" style="top:785px;letter-spacing:0.050px;right:1056.45px;font-size:12.25px;">42,211.12</div>
<div class="t" style="top:785px;letter-spacing:0.050px;right:836.45px;font-size:12.25px;">135,970,306.2</div>
<div class="t" style="top:785px;letter-spacing:0.050px;right:724.45px;font-size:12.25px;">679,899</div>
<div class="t" style="top:785px;letter-spacing:0.050px;right:600.45px;font-size:12.25px;">20,020,772</div>
<div class="t" style="top:785px;letter-spacing:0.050px;right:488.45px;font-size:12.25px;">0.034</div>
<div class="abs" style="left:24px;top:802px;width:1575px;height:31px;background:#f7f7f7;"></div>
<div class="abs" style="left:1558px;top:586px;width:15px;height:216px;background:#f7f7f7;"></div>
<div class="abs" style="left:1558px;top:603px;width:15px;height:17px;background:#cdd1cd;"></div>
<svg style="left:1561px;top:591px" width="10" height="10" fill="none" stroke="#3c3c3c" stroke-width="1.900"><path d="M.8 6.200L4.500 2.500 8.200 6.200"/></svg>
<svg style="left:1561px;top:789px" width="10" height="10" fill="none" stroke="#3c3c3c" stroke-width="1.900"><path d="M.8 2.500L4.500 6.200 8.200 2.500"/></svg>
<svg style="left:1579px;top:595px" width="16" height="15" ><rect x="1.800" y=".7" width="13" height="12.600" fill="#fff" stroke="#1e88d2" stroke-width="1.300"/><path d="M8 .7h6.800v9H8z" fill="#6cc6f0" stroke="#1e88d2" stroke-width="1"/><circle cx="3.400" cy="11.400" r="2.800" fill="#1e88d2" stroke="#f7f7f7" stroke-width=".8"/><circle cx="3.400" cy="11.400" r="1" fill="#f7f7f7"/></svg>
<div class="t" style="left:1580px;top:612px;width:24px;font-size:12px;transform-origin:0 0;transform:translate(14px,0) rotate(90deg)">面板</div>
<svg style="left:1578px;top:653px" width="15" height="15" ><rect x=".7" y=".7" width="13.300" height="13" fill="#fff" stroke="#1e88d2" stroke-width="1.300"/><rect x="1" y="1" width="12.600" height="7.600" fill="#bfe4f7"/><rect x="1.5" y="1.5" width="2.400" height="2.400" fill="#1e88d2"/><rect x="1.5" y="6.3" width="2.400" height="2.400" fill="#1e88d2"/><rect x="3.9" y="3.9" width="2.400" height="2.400" fill="#1e88d2"/><rect x="6.3" y="1.5" width="2.400" height="2.400" fill="#1e88d2"/><rect x="6.3" y="6.3" width="2.400" height="2.400" fill="#1e88d2"/><rect x="8.7" y="3.9" width="2.400" height="2.400" fill="#1e88d2"/><rect x="11.1" y="1.5" width="2.400" height="2.400" fill="#1e88d2"/><rect x="11.1" y="6.3" width="2.400" height="2.400" fill="#1e88d2"/></svg>
<svg style="left:1577px;top:674px" width="16" height="16" ><circle cx="8" cy="8" r="7" fill="none" stroke="#1e88d2" stroke-width="1.300"/><rect x="5" y="5" width="2" height="2" fill="#1e88d2"/><rect x="9" y="5" width="2" height="2" fill="#1e88d2"/><rect x="5" y="9" width="2" height="2" fill="#1e88d2"/><rect x="9" y="9" width="2" height="2" fill="#1e88d2"/></svg>
<svg style="left:1578px;top:696px" width="15" height="17" ><rect x=".6" y="5.600" width="13.600" height="10.400" rx="1" fill="#1e88d2"/><path d="M.6 9.200h13.600M.6 12.600h13.600M4 8.400v7.600M10.600 8.400v7.600" stroke="#fff" stroke-width=".9"/><rect x="4.200" y="5.600" width="3" height="10.400" fill="#f5820b"/><path d="M4.200 9.200h3M4.200 12.600h3" stroke="#fff" stroke-width=".9"/><path d="M5.700 0v3.800M4.200 2.300l1.500 1.500 1.500-1.500" fill="none" stroke="#f5820b" stroke-width="1"/></svg>
<svg style="left:1578px;top:719px" width="15" height="15" ><rect x=".7" y=".7" width="13.300" height="13.300" fill="#fff" stroke="#1e88d2" stroke-width="1.400"/><rect x=".7" y=".7" width="13.300" height="2.300" fill="#1e88d2"/><rect x="1.800" y="3.800" width="6.600" height="4.800" fill="#6cc6f0"/><path d="M9.400 11.400h5M9.400 9.800v3.200M14.400 9.800v3.200" stroke="#1e88d2" stroke-width="1.100" fill="none"/><rect x="8.600" y="8.600" width="6.400" height="6" fill="#f7f7f7" opacity="0"/></svg>
<svg style="left:1578px;top:741px" width="15" height="15" ><circle cx="3.600" cy="3.600" r="3" fill="#1e88d2"/><circle cx="11.200" cy="3.600" r="3" fill="#1e88d2"/><circle cx="3.600" cy="11.200" r="3" fill="#1e88d2"/><circle cx="11.200" cy="11.200" r="3" fill="#f5820b"/><path d="M2 3.600h3.200M9.600 3.600h3.200M11.200 2v3.200M2.400 10l2.400 2.400M4.800 10l-2.400 2.400M9.600 10.400h3.200M9.600 12h3.200" stroke="#fff" stroke-width=".9"/></svg>
<svg style="left:1578px;top:816px" width="16" height="15" ><rect x=".6" y=".6" width="3.800" height="13.600" rx="1.200" fill="#1e88d2"/><rect x="6.400" y="10.400" width="8" height="3.800" rx="1.200" fill="#1e88d2"/><path d="M13.400 8.600c0-3-1.800-4.800-4.800-4.800M10.400 1.200L8 3.800l2.600 2.400" fill="none" stroke="#1e88d2" stroke-width="1.400"/></svg>
<svg style="left:59px;top:808px" width="16" height="17" ><g fill="none" stroke="#1a8ad0" stroke-width="1.300" stroke-linejoin="round"><path d="M6.500.9L10.900 5.300 8.800 6.700C8 5.200 7.600 4.800 7.200 4.800 5.800 4.800 4.600 5.600 4.300 6.700L4 10.400 1.700 9.300C.8 8.200.7 7 .9 5.900 1.400 4.400 2.400 3.600 3.700 3.200L6.300 3.100z"/><path d="M6.500.9L10.900 5.300 8.800 6.700C8 5.200 7.600 4.800 7.200 4.800 5.800 4.800 4.600 5.600 4.300 6.700L4 10.400 1.700 9.300C.8 8.200.7 7 .9 5.900 1.400 4.400 2.400 3.600 3.700 3.200L6.300 3.100z" transform="rotate(180 7.920 8.400)"/></g></svg>
<div class="t" style="top:810px;left:79px;">刷新</div>
<svg style="left:118px;top:815px" width="8.6" height="5.2" ><path d="M0 0h7.6L3.8 4.2z" fill="#000"/></svg>
<svg style="left:134px;top:810px" width="2" height="16" ><rect x="0" y="0" width="2" height="2" fill="#aaa68a"/><rect x="0" y="4" width="2" height="2" fill="#aaa68a"/><rect x="0" y="8" width="2" height="2" fill="#aaa68a"/><rect x="0" y="12" width="2" height="2" fill="#aaa68a"/></svg>
<svg style="left:146px;top:809px" width="15" height="15" ><circle cx="7.500" cy="7.500" r="6.700" fill="none" stroke="#ababab" stroke-width="1.200"/><path d="M4 7.800l2.600 2.600L11.200 5" fill="none" stroke="#ababab" stroke-width="1.200"/></svg>
<div class="t" style="top:810px;left:166px;color:#a6a6a6;">保存</div>
<svg style="left:204px;top:815px" width="8.6" height="5.2" ><path d="M0 0h7.6L3.8 4.2z" fill="#7a7a7a"/></svg>
<svg style="left:221px;top:810px" width="13" height="13" ><rect x=".6" y=".6" width="11.600" height="11.600" fill="none" stroke="#ababab" stroke-width="1.100"/><path d="M3.400 3.400l6 6M9.400 3.400l-6 6" stroke="#ababab" stroke-width="1.100"/></svg>
<div class="t" style="top:810px;left:239px;color:#a6a6a6;">取消</div>
<div class="abs" style="left:273px;top:804px;width:1px;height:27px;background:#7f7f7f;"></div>
<svg style="left:284px;top:811px" width="16" height="14" ><path d="M0 1h14.600M0 5.800h10.600M0 10.600h6.600" stroke="#1e88d2" stroke-width="1.700"/><path d="M8.200 13.200l6-6 1.200 1.200-6 6-1.800.4z" fill="#1e88d2"/></svg>
<svg style="left:308px;top:811px" width="16" height="14" ><path d="M0 1h13.600M0 5.800h6.600M0 10.600h6.600" stroke="#ababab" stroke-width="1.700"/><path d="M8.400 9h7M11.900 5.500v7" stroke="#ababab" stroke-width="1.700"/></svg>
<svg style="left:332px;top:811px" width="16" height="14" ><path d="M0 1h14M0 5.800h3M0 10.600h3" stroke="#ababab" stroke-width="1.700"/><path d="M6.600 4.600C5 6 5 11 6.600 12.600M12.400 4.600C14 6 14 11 12.400 12.600M7.300 8.600h4.400M9.500 6.400v4.400" fill="none" stroke="#ababab" stroke-width="1.100"/></svg>
<svg style="left:356px;top:811px" width="16" height="14" ><path d="M0 1h14M0 5.800h6M0 10.600h6M8.400 10.600h6.600" stroke="#ababab" stroke-width="1.700"/></svg>
<svg style="left:379px;top:810px" width="2" height="16" ><rect x="0" y="0" width="2" height="2" fill="#aaa68a"/><rect x="0" y="4" width="2" height="2" fill="#aaa68a"/><rect x="0" y="8" width="2" height="2" fill="#aaa68a"/><rect x="0" y="12" width="2" height="2" fill="#aaa68a"/></svg>
<svg style="left:387px;top:809px" width="13" height="16" ><path d="M2 1v14M11.600 1.400L5.200 8l6.400 6.600" fill="none" stroke="#979797" stroke-width="2"/></svg>
<svg style="left:412px;top:809px" width="10" height="16" ><path d="M8.600 1.400L2.200 8l6.400 6.600" fill="none" stroke="#979797" stroke-width="2"/></svg>
<svg style="left:436px;top:809px" width="10" height="16" ><path d="M1.400 1.400L7.800 8l-6.400 6.600" fill="none" stroke="#0a90d6" stroke-width="2"/></svg>
<svg style="left:457px;top:809px" width="13" height="16" ><path d="M11 1v14M1.400 1.400L7.800 8l-6.400 6.600" fill="none" stroke="#0a90d6" stroke-width="2"/></svg>
<svg style="left:479px;top:810px" width="16" height="15" ><path d="M.7 4.400V.7h3.600M11 .7h3.600v3.700M14.600 10.400v3.700H11M4.300 14.100H.7v-3.700" fill="none" stroke="#1e88d2" stroke-width="1.400"/><path d="M4.600 3.600h4.200l1.900 1.900v5.800H4.600z" fill="#7cc8f0" stroke="#1e88d2" stroke-width="1"/></svg>
<svg style="left:502px;top:810px" width="2" height="16" ><rect x="0" y="0" width="2" height="2" fill="#aaa68a"/><rect x="0" y="4" width="2" height="2" fill="#aaa68a"/><rect x="0" y="8" width="2" height="2" fill="#aaa68a"/><rect x="0" y="12" width="2" height="2" fill="#aaa68a"/></svg>
<svg style="left:517px;top:809px" width="14" height="16" ><path d="M.8 9.600v5h12v-5" fill="none" stroke="#1e88d2" stroke-width="1.400"/><path d="M6.800 11.400V1.600M3.200 5l3.600-3.600L10.400 5" fill="none" stroke="#1e88d2" stroke-width="1.400"/></svg>
<div class="t" style="top:810px;letter-spacing:-0.074px;left:536px;">导出数据...</div>
<svg style="left:608px;top:815px" width="8.6" height="5.2" ><path d="M0 0h7.6L3.8 4.2z" fill="#000"/></svg>
<svg style="left:624px;top:810px" width="2" height="16" ><rect x="0" y="0" width="2" height="2" fill="#aaa68a"/><rect x="0" y="4" width="2" height="2" fill="#aaa68a"/><rect x="0" y="8" width="2" height="2" fill="#aaa68a"/><rect x="0" y="12" width="2" height="2" fill="#aaa68a"/></svg>
<svg style="left:631.5px;top:809.5px" width="15" height="15" ><g transform="translate(7.500 7.500)" fill="#0a90d6"><rect x="-1.500" y="-7.300" width="3" height="4" rx=".6" transform="rotate(0)"/><rect x="-1.500" y="-7.300" width="3" height="4" rx=".6" transform="rotate(60)"/><rect x="-1.500" y="-7.300" width="3" height="4" rx=".6" transform="rotate(120)"/><rect x="-1.500" y="-7.300" width="3" height="4" rx=".6" transform="rotate(180)"/><rect x="-1.500" y="-7.300" width="3" height="4" rx=".6" transform="rotate(240)"/><rect x="-1.500" y="-7.300" width="3" height="4" rx=".6" transform="rotate(300)"/><circle r="5.400"/><path d="M0-2.600L2.600 0 0 2.600-2.600 0z" fill="#66d0f2"/></g></svg>
<div class="abs" style="left:654px;top:806px;width:54px;height:23px;background:#fff;border:1px solid #7a7a7a"></div>
<div class="t" style="top:810px;letter-spacing:0.182px;left:658px;font-size:12.25px;">200</div>
<svg style="left:714px;top:809px" width="16" height="16" ><path d="M.8 10.400v4.800h13.600v-4.800" fill="none" stroke="#1e88d2" stroke-width="1.300"/><path d="M2.600 1l5 5 5-5M7.600 6v4.600M5.600 8.600l2 2 2-2" fill="none" stroke="#1e88d2" stroke-width="1.200"/></svg>
<div class="t" style="top:810px;letter-spacing:0.182px;left:737px;font-size:12.25px;">204</div>
<svg style="left:765px;top:810px" width="2" height="16" ><rect x="0" y="0" width="2" height="2" fill="#aaa68a"/><rect x="0" y="4" width="2" height="2" fill="#aaa68a"/><rect x="0" y="8" width="2" height="2" fill="#aaa68a"/><rect x="0" y="12" width="2" height="2" fill="#aaa68a"/></svg>
<svg style="left:793px;top:816px" width="9" height="2" ><rect x="0" width="1.500" height="1.500" fill="#555"/><rect x="3.500" width="1.500" height="1.500" fill="#555"/><rect x="7" width="1.500" height="1.500" fill="#555"/></svg>
<div class="t" style="top:809px;letter-spacing:0.309px;left:812px;">200 行已获取 - 10.986s (1ms 获取), 2025-10-21 20:40:41</div>
<div class="abs" style="left:778px;top:835px;width:1px;height:22px;background:#a0a0a0;"></div>
<div class="abs" style="left:814px;top:835px;width:1px;height:22px;background:#a0a0a0;"></div>
<div class="abs" style="left:841px;top:835px;width:1px;height:22px;background:#a0a0a0;"></div>
<div class="abs" style="left:975px;top:835px;width:1px;height:22px;background:#a0a0a0;"></div>
<div class="abs" style="left:1103px;top:835px;width:1px;height:22px;background:#a0a0a0;"></div>
<div class="abs" style="left:1231px;top:835px;width:1px;height:22px;background:#a0a0a0;"></div>
<div class="t" style="top:837px;letter-spacing:-0.667px;left:786px;">CST</div>
<div class="t" style="top:837px;letter-spacing:0.656px;left:822px;">zh</div>
<div class="t" style="top:837px;left:849px;">可写</div>
<div class="t" style="top:837px;left:982px;">智能插入</div>
<div class="t" style="top:837px;letter-spacing:0.384px;left:1111px;">1106 : 1 : 48663</div>
<div class="t" style="top:837px;letter-spacing:0.184px;left:1239px;">Sel: 0 | 0</div>
<svg style="left:1316px;top:838px" width="2" height="16" ><rect x="0" y="0" width="2" height="2" fill="#b9b0a0"/><rect x="0" y="4" width="2" height="2" fill="#b9b0a0"/><rect x="0" y="8" width="2" height="2" fill="#b9b0a0"/><rect x="0" y="12" width="2" height="2" fill="#b9b0a0"/></svg>
<div id="taskbar" class="abs"></div>
<svg style="left:16px;top:872px" width="17" height="17" ><path d="M0 2.300L6.800 1.400v6.400H0zM7.800 1.200L16.400 0v7.800H7.800zM0 8.800h6.800v6.400L0 14.300zM7.800 8.800h8.600v7.800L7.800 15.400z" fill="#fff"/></svg>
<svg style="left:63px;top:870px" width="19" height="19" ><circle cx="11.200" cy="7" r="5.600" fill="none" stroke="#fff" stroke-width="1.300"/><path d="M7.200 11L1 17.200" stroke="#fff" stroke-width="1.500"/></svg>
<svg style="left:112px;top:872px" width="17" height="16" ><path d="M1 .7h10.600M1 14.700h10.600" stroke="#fff" stroke-width="1.200"/><rect x="1" y="3.600" width="10.400" height="8.200" fill="none" stroke="#fff" stroke-width="1.300"/><path d="M14.800 .2v3M14.800 11.800v3.600" stroke="#fff" stroke-width="1.200"/><rect x="13.600" y="4.400" width="2.600" height="2.600" fill="#fff"/><path d="M1 .2v1.600M11.600 .2v1.600M1 13.600v1.600M11.600 13.600v1.600" stroke="#fff" stroke-width="1.100"/></svg>
<svg style="left:158px;top:866px" width="27" height="27" ><path d="M20.600 15.200A7.600 7.600 0 1 1 20.800 11.600H7.600" fill="none" stroke="#35b4f1" stroke-width="4.200"/><path d="M22.800 3.200C20.600 1.200 15.400 2.600 10.600 6.200 4.800 10.600 1.200 17 2.800 20.600c.8 1.800 3 2.200 5.600 1.200-1.800.2-3-.4-3.400-1.600C4 17.200 7.600 11.800 12.600 8c4-3 7.800-4.400 9.400-3.400.8.500 1 1.500.6 2.800 1.200-1.600 1.400-3.200.2-4.200z" fill="#f2c21b"/></svg>
<svg style="left:209px;top:870px" width="23" height="20" ><path d="M.4 2.200C.4 1.500 1 1 1.700 1h6.200l1.600 1.700H21c.7 0 1.300.6 1.300 1.300v14.400H.4z" fill="#e9b949"/><path d="M.4 4.600h21.900v13.800H.4z" fill="#ffe596"/><path d="M1.600 2h5.600" stroke="#fff4c9" stroke-width=".8"/><path d="M4.400 19.400v-7.200c0-.7.500-1.200 1.200-1.200h11.200c.7 0 1.200.5 1.200 1.200v7.200h-3.600v-4.600H8v4.600z" fill="#2aa2f0"/></svg>
<svg style="left:256px;top:867px" width="26" height="26" viewBox="-13 -13 26 26"><circle r="11" fill="#fcfcfc" stroke="#3aa9ae" stroke-width="1.700"/><path d="M-4.600 9.400C-4.400 5.600-3.200 2.800-1 1.200L1.600 3.200 4.600.8 6.200 2.200C6.400 5 5.400 7.600 3.400 9.400 1 10.600-2.400 10.600-4.600 9.400z" fill="#33231e"/><path d="M2.400-5.200c1.400-.6 3.400-.4 4.400.2-.2 1.400-1.200 2.400-2.600 2.600C3.200-3 2.600-4 2.400-5.200z" fill="#33231e"/><path d="M-8.400 2.400C-8-2.600-5-6.600-.4-7.800 1.600-8.200 3.600-7.800 5.200-6.800" fill="none" stroke="#4a3a34" stroke-width=".8"/><path d="M-5.200-3.800c.8-.4 1.600-.4 2.400 0M-6.600-.6l.4 1.800" fill="none" stroke="#6a5a54" stroke-width=".7"/><circle cx="-.4" cy="-3.800" r=".8" fill="#33231e"/><path d="M4.400-.6h1.500v4.400H4.400z" fill="#fff" stroke="#33231e" stroke-width=".4"/></svg>
<div class="abs" style="left:294px;top:860px;width:48px;height:40px;background:#343434;"></div>
<div class="abs" style="left:294px;top:898px;width:48px;height:2px;background:#7cbef0;"></div>
<svg style="left:305px;top:867px" width="26" height="26" viewBox="-13 -13 26 26"><circle r="11" fill="#fcfcfc" stroke="#3aa9ae" stroke-width="1.700"/><path d="M-4.600 9.400C-4.400 5.600-3.200 2.800-1 1.200L1.600 3.200 4.600.8 6.200 2.200C6.400 5 5.400 7.600 3.400 9.400 1 10.600-2.400 10.600-4.600 9.400z" fill="#33231e"/><path d="M2.400-5.200c1.400-.6 3.400-.4 4.400.2-.2 1.400-1.200 2.400-2.600 2.600C3.200-3 2.600-4 2.400-5.200z" fill="#33231e"/><path d="M-8.400 2.400C-8-2.600-5-6.600-.4-7.800 1.600-8.200 3.600-7.800 5.200-6.800" fill="none" stroke="#4a3a34" stroke-width=".8"/><path d="M-5.200-3.800c.8-.4 1.600-.4 2.400 0M-6.600-.6l.4 1.800" fill="none" stroke="#6a5a54" stroke-width=".7"/><circle cx="-.4" cy="-3.800" r=".8" fill="#33231e"/><path d="M4.400-.6h1.500v4.400H4.400z" fill="#fff" stroke="#33231e" stroke-width=".4"/></svg>
<svg style="left:1347px;top:875px" width="14" height="9" ><path d="M.6 8L6.800 1.400 13 8" fill="none" stroke="#fff" stroke-width="1.300"/></svg>
<svg style="left:1371px;top:871px" width="16" height="19" ><rect x="3.200" y=".8" width="5.600" height="4.400" fill="none" stroke="#fff" stroke-width="1.100"/><rect x="4.700" y="2.200" width="1" height="1.200" fill="#fff"/><rect x="6.400" y="2.200" width="1" height="1.200" fill="#fff"/><path d="M2 5.200h8v10.200c0 .8-.6 1.400-1.400 1.400H3.400c-.8 0-1.400-.6-1.400-1.400z" fill="none" stroke="#fff" stroke-width="1.100"/><path d="M9 14.800l2 2 3.400-3.800" fill="none" stroke="#bbb" stroke-width="1"/></svg>
<svg style="left:1393px;top:873px" width="18" height="15" ><rect x="3.400" y=".8" width="13.600" height="9.600" fill="none" stroke="#fff" stroke-width="1.100"/><path d="M10 10.400v3.200M6.400 13.800h7.600" stroke="#fff" stroke-width="1.100"/><rect x=".6" y=".8" width="4.600" height="3.600" fill="#000" stroke="#fff" stroke-width="1"/><path d="M2.900 4.400v9.400h3.500" fill="none" stroke="#fff" stroke-width="1"/></svg>
<svg style="left:1417px;top:872px" width="18" height="16" ><path d="M.8 5.400h3L8 1.400v13.200l-4.200-4H.8z" fill="none" stroke="#fff" stroke-width="1.100"/><path d="M10.400 5.200c1 1.600 1 4 0 5.600M12.800 3.400c1.800 2.600 1.800 6.600 0 9.200M15.200 1.600c2.600 3.800 2.600 9 0 12.800" fill="none" stroke="#fff" stroke-width="1.100"/></svg>
<div class="t" style="top:872px;letter-spacing:-0.698px;left:1443.5px;font-size:12.5px;color:#fff;">ENG</div>
<div class="t" style="top:863px;letter-spacing:0.069px;left:1495px;font-size:12.25px;color:#fff;">20:40</div>
<div class="t" style="top:882px;letter-spacing:0.369px;left:1477px;font-size:12.25px;color:#fff;">2025/10/21</div>
<svg style="left:1558px;top:871px" width="24" height="25" ><path d="M1.400 1h15.800v11.600H6.200L1.400 16.800z" fill="#fff"/><path d="M4 4h10.600M4 6.800h10.600M4 9.600h10.600" stroke="#000" stroke-width="1"/><circle cx="15" cy="16" r="7.800" fill="#3c3c3c" stroke="#000" stroke-width="1"/></svg>
<div class="t" style="top:879px;left:1569.5px;color:#fff;font-weight:bold;">1</div>
<div class="abs" style="left:1595px;top:860px;width:1px;height:40px;background:#5c5c5c;"></div>
<div id="wm" class="abs" style="left:0;top:0;width:1600px;height:860px;overflow:hidden;pointer-events:none;opacity:.072">
<div class="wm" style="left:-228px;top:-92.5px"><i>audit</i><b>审计01(Audit1)</b><br><span>audit-172.18.210.237</span></div>
<div class="wm" style="left:72px;top:-92.5px"><i>audit</i><b>审计01(Audit1)</b><br><span>audit-172.18.210.237</span></div>
<div class="wm" style="left:372px;top:-92.5px"><i>audit</i><b>审计01(Audit1)</b><br><span>audit-172.18.210.237</span></div>
<div class="wm" style="left:672px;top:-92.5px"><i>audit</i><b>审计01(Audit1)</b><br><span>audit-172.18.210.237</span></div>
<div class="wm" style="left:972px;top:-92.5px"><i>audit</i><b>审计01(Audit1)</b><br><span>audit-172.18.210.237</span></div>
<div class="wm" style="left:1272px;top:-92.5px"><i>audit</i><b>审计01(Audit1)</b><br><span>audit-172.18.210.237</span></div>
<div class="wm" style="left:1572px;top:-92.5px"><i>audit</i><b>审计01(Audit1)</b><br><span>audit-172.18.210.237</span></div>
<div class="wm" style="left:-228px;top:207.5px"><i>audit</i><b>审计01(Audit1)</b><br><span>audit-172.18.210.237</span></div>
<div class="wm" style="left:72px;top:207.5px"><i>audit</i><b>审计01(Audit1)</b><br><span>audit-172.18.210.237</span></div>
<div class="wm" style="left:372px;top:207.5px"><i>audit</i><b>审计01(Audit1)</b><br><span>audit-172.18.210.237</span></div>
<div class="wm" style="left:672px;top:207.5px"><i>audit</i><b>审计01(Audit1)</b><br><span>audit-172.18.210.237</span></div>
<div class="wm" style="left:972px;top:207.5px"><i>audit</i><b>审计01(Audit1)</b><br><span>audit-172.18.210.237</span></div>
<div class="wm" style="left:1272px;top:207.5px"><i>audit</i><b>审计01(Audit1)</b><br><span>audit-172.18.210.237</span></div>
<div class="wm" style="left:1572px;top:207.5px"><i>audit</i><b>审计01(Audit1)</b><br><span>audit-172.18.210.237</span></div>
<div class="wm" style="left:-228px;top:507.5px"><i>audit</i><b>审计01(Audit1)</b><br><span>audit-172.18.210.237</span></div>
<div class="wm" style="left:72px;top:507.5px"><i>audit</i><b>审计01(Audit1)</b><br><span>audit-172.18.210.237</span></div>
<div class="wm" style="left:372px;top:507.5px"><i>audit</i><b>审计01(Audit1)</b><br><span>audit-172.18.210.237</span></div>
<div class="wm" style="left:672px;top:507.5px"><i>audit</i><b>审计01(Audit1)</b><br><span>audit-172.18.210.237</span></div>
<div class="wm" style="left:972px;top:507.5px"><i>audit</i><b>审计01(Audit1)</b><br><span>audit-172.18.210.237</span></div>
<div class="wm" style="left:1272px;top:507.5px"><i>audit</i><b>审计01(Audit1)</b><br><span>audit-172.18.210.237</span></div>
<div class="wm" style="left:1572px;top:507.5px"><i>audit</i><b>审计01(Audit1)</b><br><span>audit-172.18.210.237</span></div>
<div class="wm" style="left:-228px;top:807.5px"><i>audit</i><b>审计01(Audit1)</b><br><span>audit-172.18.210.237</span></div>
<div class="wm" style="left:72px;top:807.5px"><i>audit</i><b>审计01(Audit1)</b><br><span>audit-172.18.210.237</span></div>
<div class="wm" style="left:372px;top:807.5px"><i>audit</i><b>审计01(Audit1)</b><br><span>audit-172.18.210.237</span></div>
<div class="wm" style="left:672px;top:807.5px"><i>audit</i><b>审计01(Audit1)</b><br><span>audit-172.18.210.237</span></div>
<div class="wm" style="left:972px;top:807.5px"><i>audit</i><b>审计01(Audit1)</b><br><span>audit-172.18.210.237</span></div>
<div class="wm" style="left:1272px;top:807.5px"><i>audit</i><b>审计01(Audit1)</b><br><span>audit-172.18.210.237</span></div>
<div class="wm" style="left:1572px;top:807.5px"><i>audit</i><b>审计01(Audit1)</b><br><span>audit-172.18.210.237</span></div>
</div>
</body>
</html>
